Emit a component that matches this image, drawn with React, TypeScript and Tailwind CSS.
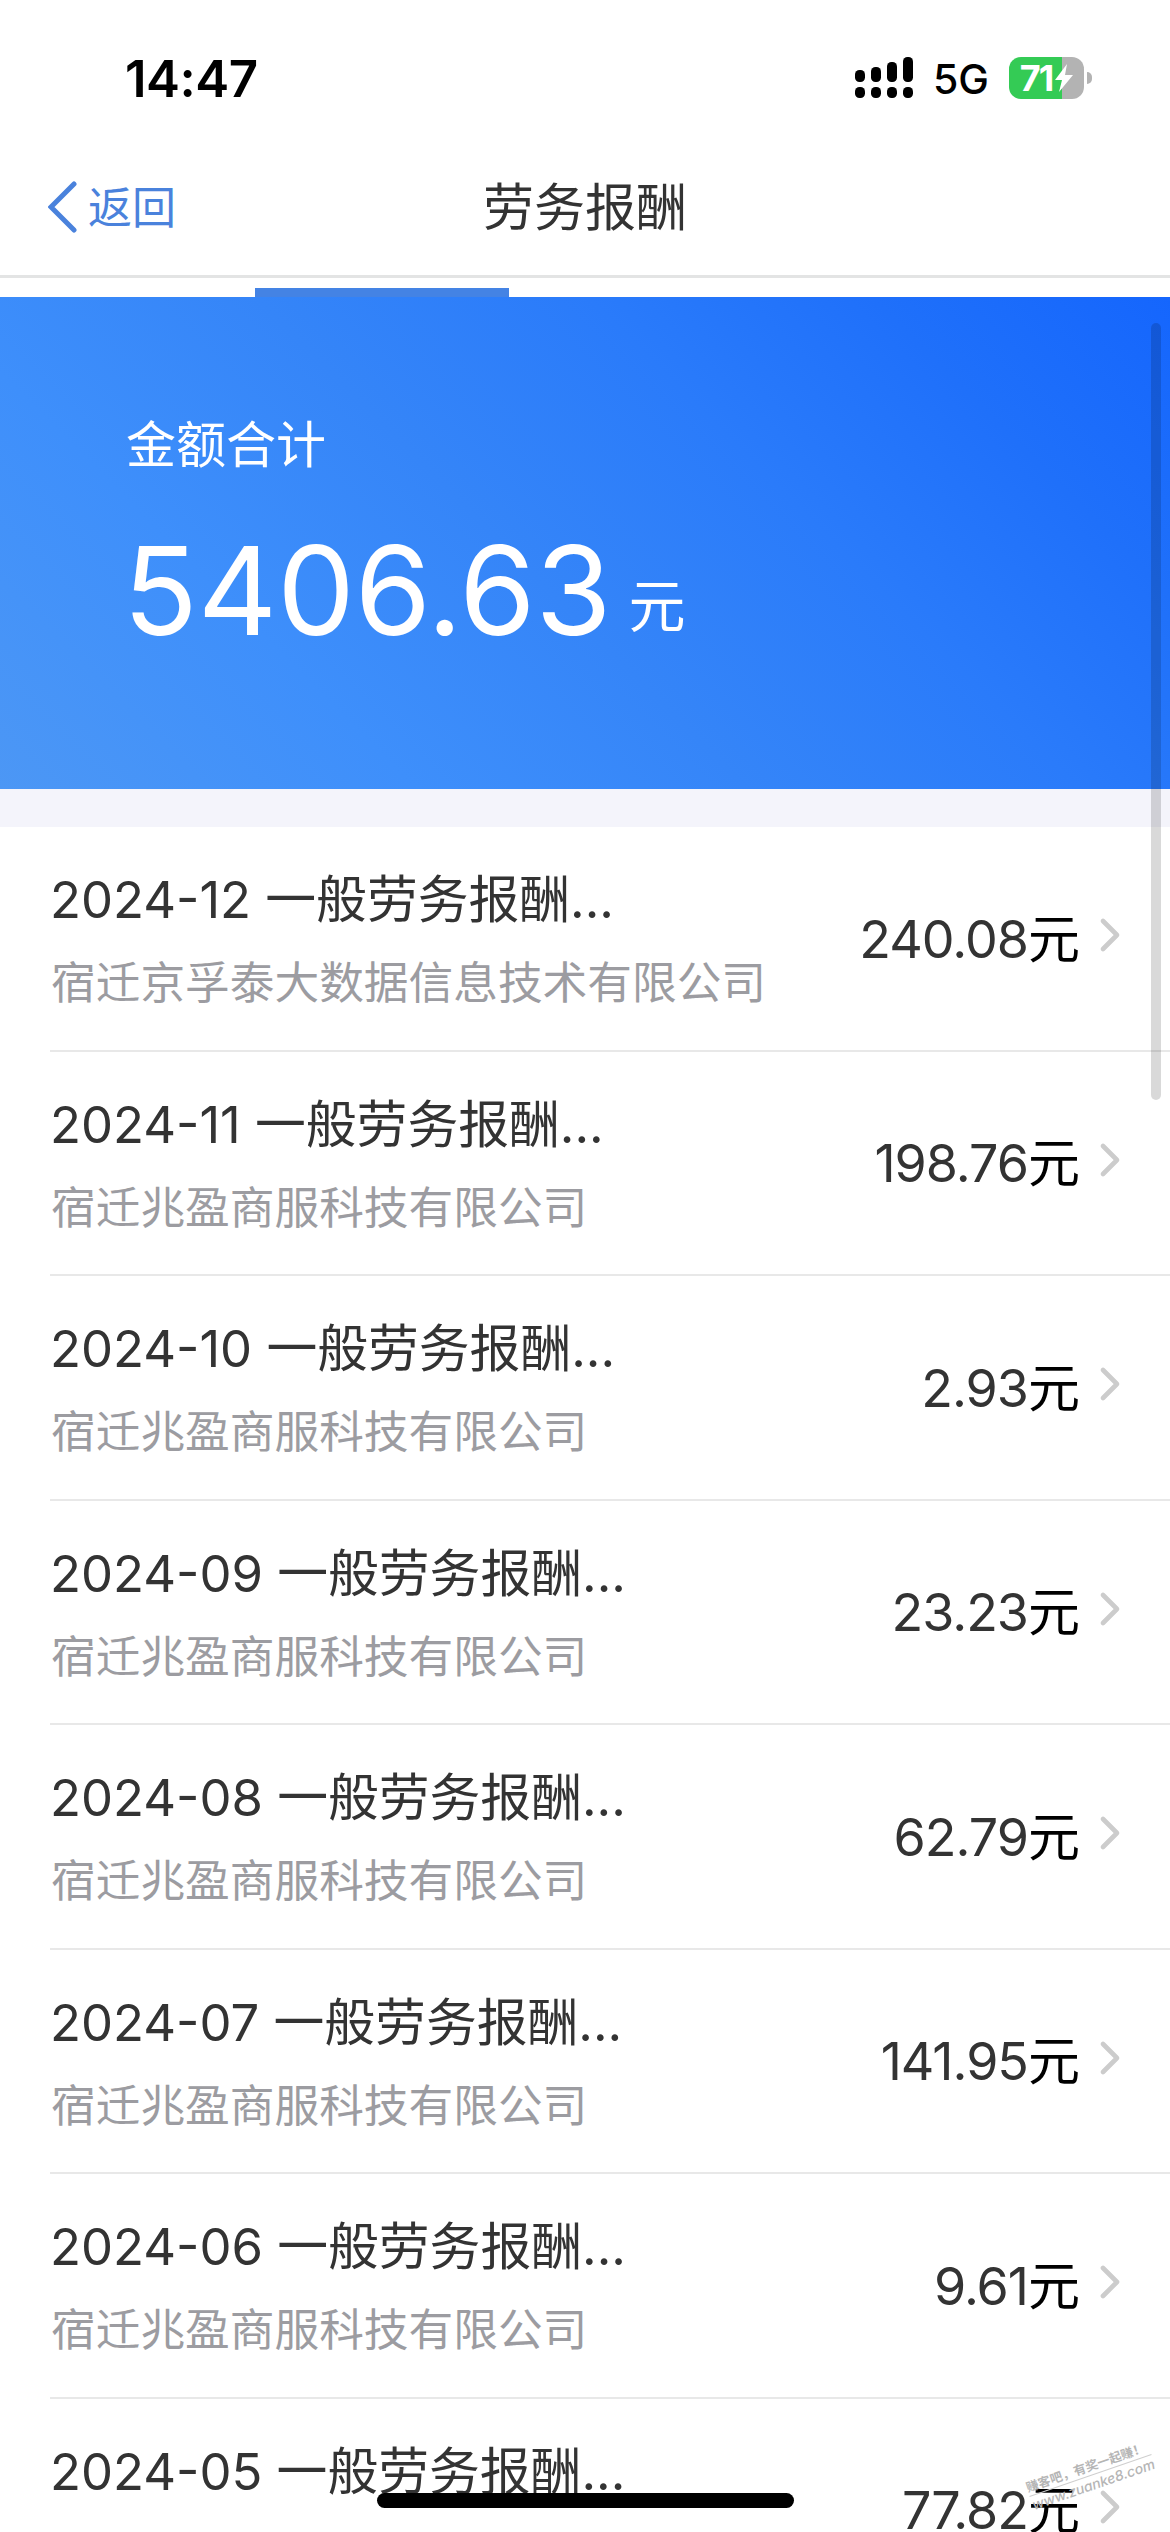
import { ChevronRight } from 'lucide-react';

type IncomeRecord = { month: string; company: string; amount: string };

const RECORDS: IncomeRecord[] = [
  { month: '2024-12', company: '宿迁京孚泰大数据信息技术有限公司', amount: '240.08' },
  { month: '2024-11', company: '宿迁兆盈商服科技有限公司', amount: '198.76' },
  { month: '2024-10', company: '宿迁兆盈商服科技有限公司', amount: '2.93' },
  { month: '2024-09', company: '宿迁兆盈商服科技有限公司', amount: '23.23' },
  { month: '2024-08', company: '宿迁兆盈商服科技有限公司', amount: '62.79' },
  { month: '2024-07', company: '宿迁兆盈商服科技有限公司', amount: '141.95' },
  { month: '2024-06', company: '宿迁兆盈商服科技有限公司', amount: '9.61' },
  { month: '2024-05', company: '', amount: '77.82' },
];

function StatusBar() {
  return (
    <div className="flex h-[156px] shrink-0 items-center justify-between pl-[125px] pr-[78px] text-black">
      <span className="text-[51px] font-semibold leading-none tracking-[-0.5px]">14:47</span>
      <div className="flex items-center">
        {/* Dual SIM signal */}
        <svg width="60" height="42" viewBox="0 0 60 42" fill="currentColor">
          <rect x="0" y="13" width="10" height="12" rx="4.5" />
          <rect x="16" y="10" width="10" height="15" rx="4.5" />
          <rect x="32" y="5" width="10" height="20" rx="4.5" />
          <rect x="48" y="0" width="10" height="25" rx="4.5" />
          <rect x="0" y="30" width="10" height="11" rx="4.5" />
          <rect x="16" y="30" width="10" height="11" rx="4.5" />
          <rect x="32" y="30" width="10" height="11" rx="4.5" />
          <rect x="48" y="30" width="10" height="11" rx="4.5" />
        </svg>
        <span className="ml-[18px] mt-[2px] w-[56px] whitespace-nowrap text-[41px] font-medium leading-none">5G</span>
        <div className="ml-[20px] flex items-center">
          <div className="flex h-[42px] w-[75px] items-center justify-center rounded-[12px] bg-[linear-gradient(90deg,#34cb55_71%,#b3b3b3_71%)] text-white">
            <span className="text-[36px] font-bold leading-none tracking-[-2px]">71</span>
            <svg className="ml-[3px]" width="18" height="28" viewBox="0 0 18 28" fill="currentColor">
              <path d="M12 0 0 16h7L4 28 18 11h-8z" />
            </svg>
          </div>
          <div className="ml-[3px] h-[12px] w-[5px] rounded-r-full bg-[#b3b3b3]" />
        </div>
      </div>
    </div>
  );
}

function NavBar() {
  return (
    <div className="grid h-[122px] shrink-0 grid-cols-3 items-center border-b-[3px] border-[#e3e4e4] px-[48px] pb-[17px]">
      <div className="flex items-center text-[#4a82dc]">
        <svg width="30" height="52" viewBox="0 0 30 52" fill="none" stroke="currentColor" strokeWidth="5" strokeLinecap="round">
          <path d="M26 3 3 26l23 23" />
        </svg>
        <span className="ml-[10px] pt-[2px] text-[44px] leading-none">返回</span>
      </div>
      <h1 className="text-center text-[51px] leading-none text-[#333]">劳务报酬</h1>
    </div>
  );
}

function TotalCard() {
  return (
    <div className="h-[492px] shrink-0 bg-[linear-gradient(45deg,#4c97f5_0%,#3e8ffb_25%,#3585f8_45%,#2a7bfa_65%,#1f70fa_82%,#1566fd_100%)] pl-[126px] pt-[121px] text-white">
      <p className="text-[50px] leading-[54px]">金额合计</p>
      <p className="mt-[59px] flex items-baseline leading-[120px]">
        <span className="-ml-[3px] text-[123px]">5406.63</span>
        <span className="relative -top-[8px] ml-[17px] text-[57px]">元</span>
      </p>
    </div>
  );
}

function RecordRow({ record }: { record: IncomeRecord }) {
  return (
    <li className="ml-[50px] flex h-[224.5px] shrink-0 items-center border-b-2 border-[#e8e8e8] pr-[32px]">
      <div className="h-[144px] flex-1 pt-[4px]">
        <p className="whitespace-nowrap text-[50.8px] leading-[60px] text-[#333]">{record.month} 一般劳务报酬...</p>
        <p className="mt-[23px] whitespace-nowrap pl-[1px] text-[44.7px] leading-[60px] text-[#9c9ca1]">{record.company}</p>
      </div>
      <p className="whitespace-nowrap pt-[3px] text-[52px] leading-none tracking-[-1px] text-[#333]">
        {record.amount}
        <span className="text-black">元</span>
      </p>
      <ChevronRight className="mb-[6px] ml-[3px] h-[56px] w-[56px] text-[#cccccc]" strokeWidth={2} />
    </li>
  );
}

export default function App() {
  return (
    <div className="relative flex h-[2532px] w-[1170px] flex-col overflow-hidden bg-white font-['Inter','Noto_Sans_CJK_SC',sans-serif]">
      <StatusBar />
      <NavBar />
      {/* Active tab underline */}
      <div className="flex h-[19px] shrink-0 items-end pl-[255px]">
        <div className="h-[9px] w-[254px] bg-[#4483e4]" />
      </div>
      <TotalCard />
      <div className="h-[38px] shrink-0 bg-[#f4f4fb]" />
      <ul className="flex flex-col">
        {RECORDS.map((record) => (
          <RecordRow key={record.month} record={record} />
        ))}
      </ul>

      {/* Scroll indicator */}
      <div className="absolute left-[1151px] top-[323px] h-[777px] w-[10px] rounded-full bg-black/15" />

      {/* Watermark */}
      <div className="absolute left-[1026px] top-[2458px] -rotate-[19deg] text-[12.5px] leading-[17px] text-[#b5b5b5]">
        <p className="whitespace-nowrap border-b border-[#cfcfcf] font-bold">赚客吧，有奖一起赚！</p>
        <p className="whitespace-nowrap text-[14px] font-medium italic">www.zuanke8.com</p>
      </div>

      {/* Home indicator */}
      <div className="absolute left-[377px] top-[2493px] h-[15px] w-[417px] rounded-full bg-black" />
    </div>
  );
}
